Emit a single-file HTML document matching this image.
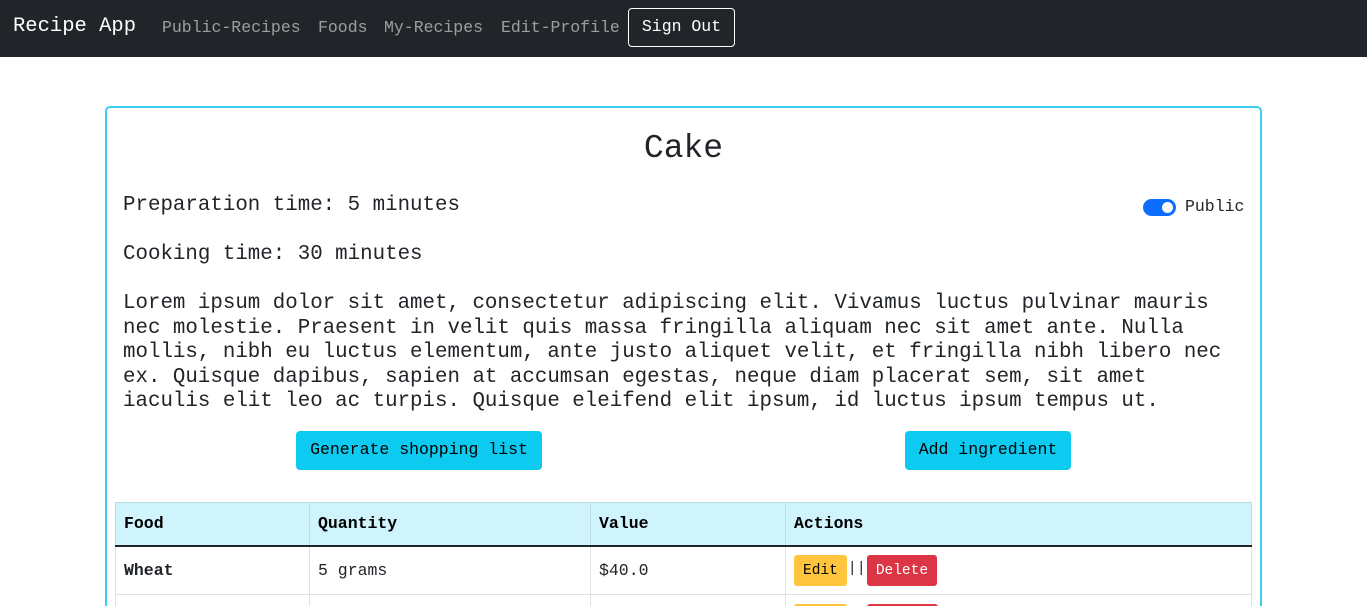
<!DOCTYPE html>
<html style="width:1367px;height:606px;overflow:hidden"><head><style>
*{box-sizing:border-box;margin:0;padding:0}
body{width:1367px;height:606px;overflow:hidden;background:#fff;font-family:"Liberation Mono","DejaVu Sans Mono",monospace;color:#212529;position:relative}
.nav{position:absolute;left:0;top:0;width:1367px;height:57px;background:#212529}
.abs{position:absolute;white-space:nowrap}
.brand{left:13px;top:15px;font-size:20.5px;color:#fff}
.nl{top:18px;font-size:16.5px;color:rgba(255,255,255,.55)}
.so{left:628px;top:8px;width:107px;height:39px;border:1px solid #fff;border-radius:4px;color:#fff;font-size:16.5px;text-align:center;line-height:36px}
.card{position:absolute;left:105px;top:106px;width:1157px;height:510px;border:2px solid #3dcdef;border-radius:5px}
.t{font-size:20.8px;color:#212529}
.btn{background:#0dcaf0;border-radius:4px;font-size:16.5px;color:#000;text-align:center;line-height:37px;height:39px}
.wrap{position:absolute;left:0;top:0;width:1367px;height:606px;overflow:hidden}
table{position:absolute;left:115px;top:502px;width:1137px;border-collapse:collapse;font-size:16.5px}
td,th{border:1px solid #dee2e6;padding:0 8px;text-align:left;height:43px}
th{background:#cff4fc;border-color:#badce3;font-weight:bold;color:#000}
thead tr{border-bottom:2px solid #212529}
tbody td{height:49px}
.b{display:inline-block;height:31px;line-height:32px;padding:0 9px;border-radius:3px;font-size:14.5px;vertical-align:middle}
</style></head><body><div class="wrap">
<div class="nav"></div>
<div class="abs brand">Recipe App</div>
<div class="abs nl" style="left:162px">Public-Recipes</div>
<div class="abs nl" style="left:318px">Foods</div>
<div class="abs nl" style="left:384px">My-Recipes</div>
<div class="abs nl" style="left:501px">Edit-Profile</div>
<div class="abs so">Sign Out</div>
<div class="card"></div>
<div class="abs" style="left:0;width:1367px;text-align:center;top:130px;font-size:33px">Cake</div>
<div class="abs t" style="left:123px;top:194px">Preparation time: 5 minutes</div>
<div class="abs" style="left:1143px;top:199px;width:33px;height:17px;border-radius:9px;background:#0d6efd"><div style="position:absolute;right:3px;top:3px;width:11px;height:11px;border-radius:50%;background:#fff"></div></div>
<div class="abs" style="left:1185px;top:197px;font-size:16.5px">Public</div>
<div class="abs t" style="left:123px;top:243px">Cooking time: 30 minutes</div>
<div class="abs t" style="left:123px;top:292px;line-height:24.5px;white-space:pre">Lorem ipsum dolor sit amet, consectetur adipiscing elit. Vivamus luctus pulvinar mauris
nec molestie. Praesent in velit quis massa fringilla aliquam nec sit amet ante. Nulla
mollis, nibh eu luctus elementum, ante justo aliquet velit, et fringilla nibh libero nec
ex. Quisque dapibus, sapien at accumsan egestas, neque diam placerat sem, sit amet
iaculis elit leo ac turpis. Quisque eleifend elit ipsum, id luctus ipsum tempus ut.</div>
<div class="abs btn" style="left:296px;top:431px;width:246px">Generate shopping list</div>
<div class="abs btn" style="left:905px;top:431px;width:166px">Add ingredient</div>
<table>
<thead><tr><th style="width:194px">Food</th><th style="width:281px">Quantity</th><th style="width:195px">Value</th><th>Actions</th></tr></thead>
<tbody>
<tr><td style="font-weight:bold">Wheat</td><td>5 grams</td><td>$40.0</td><td><span class="b" style="background:#ffc53d;color:#000">Edit</span><span style="display:inline-block;vertical-align:middle;position:relative;top:-2px;width:20px;text-align:center;font-size:15px">||</span><span class="b" style="background:#dc3545;color:#fff">Delete</span></td></tr>
<tr><td></td><td></td><td></td><td><span class="b" style="background:#ffc53d;width:53px"></span><span style="display:inline-block;width:20px"></span><span class="b" style="background:#dc3545;width:71px"></span></td></tr>
</tbody></table>
</div></body></html>
